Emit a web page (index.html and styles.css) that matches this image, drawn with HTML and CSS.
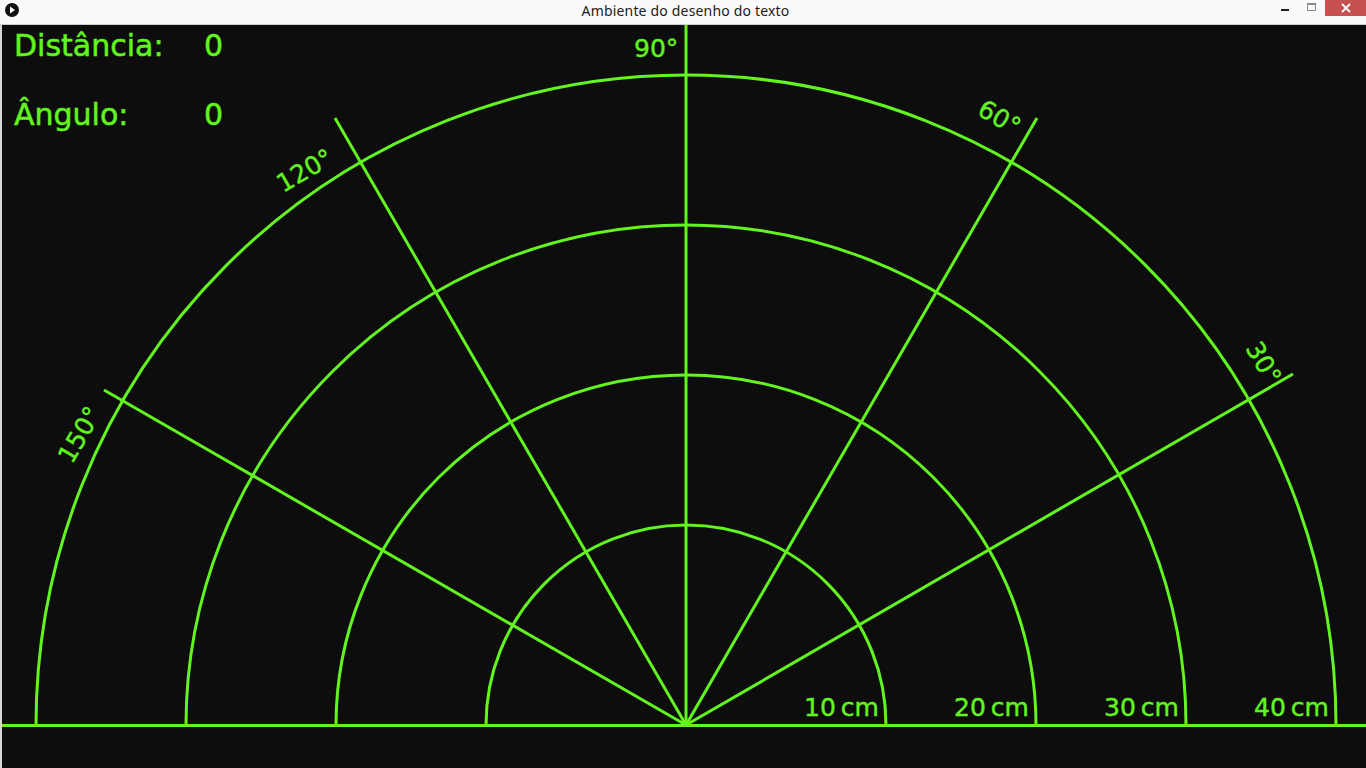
FILE: index.html
```html
<!DOCTYPE html>
<html lang="pt">
<head>
<meta charset="utf-8">
<title>Ambiente do desenho do texto</title>
<link rel="stylesheet" href="styles.css">
</head>
<body>
<div class="window">
  <header class="titlebar">
    <div class="tb-left">
      <svg class="app-icon" width="16" height="16" viewBox="0 0 16 16">
        <circle cx="8" cy="8" r="7" fill="#111"/>
        <path d="M6 4.6 L11 8 L6 11.4 Z" fill="#fff"/>
      </svg>
    </div>
    <div class="tb-title">Ambiente do desenho do texto</div>
    <div class="tb-right">
      <div class="btn btn-min"><span class="min-bar"></span></div>
      <div class="btn btn-max"><span class="max-box"></span></div>
      <div class="btn btn-close">
        <svg width="10" height="10" viewBox="0 0 10 10"><path d="M1 1 L9 9 M9 1 L1 9" stroke="#fff" stroke-width="1.8"/></svg>
      </div>
    </div>
  </header>
  <main class="canvas">
    <svg class="radar" width="1364" height="743" viewBox="2 25 1364 743">
      <g class="grid">
        <path d="M486 725 A200 200 0 0 1 886 725"/>
        <path d="M336 725 A350 350 0 0 1 1036 725"/>
        <path d="M186 725 A500 500 0 0 1 1186 725"/>
        <path d="M36 725 A650 650 0 0 1 1336 725"/>
        <path d="M2 725.5 H1366"/>
        <path d="M686 725 V25"/>
        <path d="M686 725 L1293 374"/>
        <path d="M686 725 L1037 118"/>
        <path d="M686 725 L335 118"/>
        <path d="M686 725 L104 390"/>
      </g>
      <g class="info">
        <text x="14" y="56">Distância:</text>
        <text x="204" y="56">0</text>
        <text x="14" y="125">Ângulo:</text>
        <text x="204" y="125">0</text>
      </g>
      <g class="labels">
        <text x="634" y="57">90°</text>
        <text transform="translate(976 114) rotate(30)">60°</text>
        <text transform="translate(1245 348) rotate(60)">30°</text>
        <text transform="translate(283 193) rotate(-30)">120°</text>
        <text transform="translate(72 465) rotate(-60)">150°</text>
      </g>
      <g class="labels dist">
        <text x="804" y="716">10 cm</text>
        <text x="954" y="716">20 cm</text>
        <text x="1104" y="716">30 cm</text>
        <text x="1254" y="716">40 cm</text>
      </g>
    </svg>
  </main>
</div>
</body>
</html>
```
FILE: styles.css
```css
html, body {
  margin: 0;
  padding: 0;
  width: 1366px;
  height: 768px;
  overflow: hidden;
  background: #fafafa;
}

.window {
  display: flex;
  flex-direction: column;
  width: 1366px;
  height: 768px;
}

.titlebar {
  height: 24px;
  border-bottom: 1px solid #cfcfcf;
  background: #fafafa;
  display: grid;
  grid-template-columns: 1fr auto 1fr;
  align-items: start;
  font-family: "Noto Sans", "DejaVu Sans", sans-serif;
}

.tb-left {
  display: flex;
  padding: 2px 0 0 4px;
}

.tb-title {
  font-size: 14px;
  line-height: 22px;
  letter-spacing: 0.18px;
  padding-left: 5px;
  color: #1a1a1a;
}

.tb-right {
  display: flex;
  justify-content: flex-end;
}

.btn {
  height: 16px;
  display: flex;
  align-items: center;
  justify-content: center;
}

.btn-min {
  width: 26px;
}

.min-bar {
  display: block;
  width: 8px;
  height: 2px;
  background: #222;
  margin-top: 3px;
}

.btn-max {
  width: 27px;
}

.max-box {
  display: block;
  width: 7px;
  height: 5px;
  border: 1px solid #888;
  border-top-width: 2px;
  margin-top: -3px;
}

.btn-close {
  width: 41px;
  background: #c75050;
}

.canvas {
  flex: 1;
  display: flex;
  border-left: 2px solid #d8d8d8;
  background: #0d0d0d;
  overflow: hidden;
}

.radar {
  display: block;
}

.grid path {
  fill: none;
  stroke: #62f51f;
  stroke-width: 3;
}

.info text {
  font-family: "DejaVu Sans", sans-serif;
  font-size: 30px;
  fill: #62f51f;
  stroke: #62f51f;
  stroke-width: 0.5;
}

.labels text {
  font-family: "DejaVu Sans", sans-serif;
  font-size: 25px;
  fill: #62f51f;
  stroke: #62f51f;
  stroke-width: 0.4;
}

.dist text {
  word-spacing: -3px;
}
```
